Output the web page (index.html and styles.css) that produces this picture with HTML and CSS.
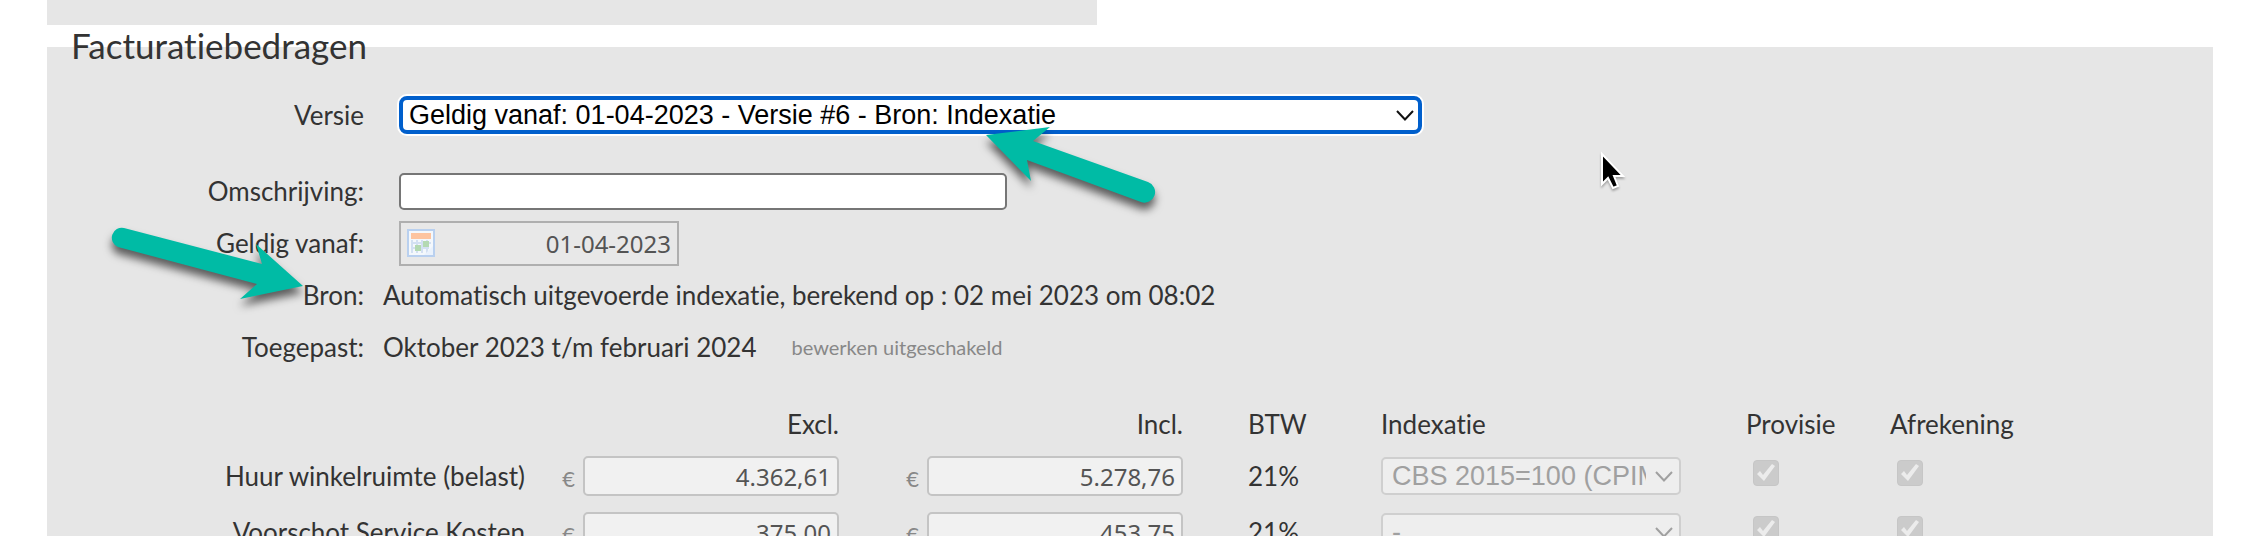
FILE: index.html
```
<!DOCTYPE html>
<html lang="nl">
<head>
    <meta charset="UTF-8">
    <meta name="viewport" content="width=device-width, initial-scale=1.0">
    <title>Facturatiebedragen</title>
    <link rel="stylesheet" href="styles.css">
</head>
<body>
    <!-- Bottom of the previous block -->
    <div class="previous-panel"></div>

    <fieldset class="panel">
        <legend>Facturatiebedragen</legend>

        <div class="row version-row">
            <label class="row-label" for="versie">Versie</label>
            <div class="field select-wrap version-select">
                <select id="versie">
                    <option>Geldig vanaf: 01-04-2023 - Versie #6 - Bron: Indexatie</option>
                </select>
                <svg class="chevron" viewBox="0 0 18 11"><path d="M1 1l8 8.500 8-8.500"/></svg>
            </div>
        </div>

        <div class="row">
            <label class="row-label" for="omschrijving">Omschrijving:</label>
            <input class="field description" type="text" id="omschrijving">
        </div>

        <div class="row">
            <label class="row-label" for="geldig">Geldig vanaf:</label>
            <div class="field date-field">
                <svg class="calendar" viewBox="0 0 28 28">
                    <rect x="1" y="1" width="26" height="26" fill="#f4f8fc" stroke="#b9d0ef" stroke-width="2"/>
                    <path d="M5 11v13M10 11v13M15 11v13M20 11v13M4 14h20M4 19h18" stroke="#d3e0f2" stroke-width="2"/>
                    <rect x="4" y="4" width="20" height="6" fill="#fdc4a0"/>
                    <path d="M17 26l9-9v9z" fill="#eaf2fc"/>
                    <rect x="16" y="12" width="6" height="6" fill="#b4d9b2"/>
                    <rect x="8" y="16" width="6" height="6" fill="#b4d9b2"/>
                </svg>
                <input type="text" id="geldig" value="01-04-2023" disabled>
            </div>
        </div>

        <div class="row">
            <span class="row-label">Bron:</span>
            <span>Automatisch uitgevoerde indexatie, berekend op : 02 mei 2023 om 08:02</span>
        </div>

        <div class="row">
            <span class="row-label">Toegepast:</span>
            <span>Oktober 2023 t/m februari 2024</span>
            <span class="hint">bewerken uitgeschakeld</span>
        </div>

        <table class="amounts">
            <colgroup>
                <col class="col-name">
                <col class="col-amount">
                <col class="col-amount">
                <col class="col-vat">
                <col class="col-index">
                <col class="col-check">
                <col>
            </colgroup>
            <thead>
                <tr>
                    <th></th>
                    <th class="right">Excl.</th>
                    <th class="right">Incl.</th>
                    <th class="vat">BTW</th>
                    <th>Indexatie</th>
                    <th>Provisie</th>
                    <th>Afrekening</th>
                </tr>
            </thead>
            <tbody>
                <tr>
                    <td class="right">Huur winkelruimte (belast)</td>
                    <td><div class="amount"><span>€</span><input type="text" value="4.362,61" aria-label="Excl." disabled></div></td>
                    <td><div class="amount"><span>€</span><input type="text" value="5.278,76" aria-label="Incl." disabled></div></td>
                    <td class="vat">21%</td>
                    <td>
                        <div class="select-wrap index-select">
                            <select aria-label="Indexatie" disabled><option>CBS 2015=100 (CPIM)</option></select>
                            <svg class="chevron" viewBox="0 0 18 11"><path d="M1 1l8 8.500 8-8.500"/></svg>
                        </div>
                    </td>
                    <td><input type="checkbox" aria-label="Provisie" checked disabled></td>
                    <td><input type="checkbox" aria-label="Afrekening" checked disabled></td>
                </tr>
                <tr>
                    <td class="right">Voorschot Service Kosten</td>
                    <td><div class="amount"><span>€</span><input type="text" value="375,00" aria-label="Excl." disabled></div></td>
                    <td><div class="amount"><span>€</span><input type="text" value="453,75" aria-label="Incl." disabled></div></td>
                    <td class="vat">21%</td>
                    <td>
                        <div class="select-wrap index-select">
                            <select aria-label="Indexatie" disabled><option>-</option></select>
                            <svg class="chevron" viewBox="0 0 18 11"><path d="M1 1l8 8.500 8-8.500"/></svg>
                        </div>
                    </td>
                    <td><input type="checkbox" aria-label="Provisie" checked disabled></td>
                    <td><input type="checkbox" aria-label="Afrekening" checked disabled></td>
                </tr>
            </tbody>
        </table>
    </fieldset>

    <!-- Arrows and mouse pointer on top of the form -->
    <svg class="overlay arrow-version" viewBox="0 0 190 100">
        <path d="M6 15L70 7 53 21 168 62A10 10 0 0 1 161 82L47 40 51 61Z"/>
    </svg>
    <svg class="overlay arrow-source" viewBox="0 0 210 90">
        <path d="M203 56L156 14 162 34 24 -2A10 10 0 0 0 18 17L157 54 140 69Z"/>
    </svg>
    <svg class="overlay pointer" viewBox="0 0 28 42">
        <path d="M2 3v30l6-6 5 10 5-2-4-10h9z" fill="#000" stroke="#fff" stroke-width="2"/>
    </svg>
</body>
</html>
```
FILE: styles.css
```
* {
    margin: 0;
    padding: 0;
    box-sizing: border-box;
}

body {
    height: 100vh;
    padding: 0 35px 0 47px;
    background: #fff;
    color: #333;
    font-family: Lato, sans-serif;
    font-size: 26px;
    font-variant-ligatures: none;
    line-height: 30px;
    overflow: hidden;
    position: relative;
}

.previous-panel {
    width: 1050px;
    height: 25px;
    background: #e6e6e6;
}

.panel {
    border: none;
    padding: 0 24px 24px;
    background: #e6e6e6;
}

legend {
    padding-bottom: 4px;
    font-size: 35px;
    line-height: 40px;
}

.row {
    display: flex;
    align-items: center;
    gap: 19px;
    height: 52px;
}

.version-row {
    margin: 20px 0 24px;
}

.row-label {
    width: 293px;
    text-align: right;
}

.field {
    margin-left: 16px;
}

input, select {
    font-family: "Noto Sans", sans-serif;
    font-size: 24px;
}

.select-wrap {
    position: relative;
}

select {
    display: block;
    width: 100%;
    height: 38px;
    appearance: none;
    font-family: "Liberation Sans", Arial, sans-serif;
    font-size: 27px;
}

.chevron {
    position: absolute;
    top: 14px;
    right: 8px;
    width: 18px;
    height: 11px;
    fill: none;
    stroke: #111;
    stroke-width: 2;
    pointer-events: none;
}

.version-select {
    width: 1023px;
}

.version-select select {
    padding: 0 30px 0 6px;
    border: 4px solid #005fcc;
    border-radius: 8px;
    background: #fff;
    color: #000;
    box-shadow: 0 0 0 2px #fff;
}

.description {
    width: 608px;
    height: 37px;
    border: 2px solid #767676;
    border-radius: 5px;
    background: #fff;
}

.date-field {
    display: flex;
    align-items: center;
    width: 280px;
    height: 45px;
    padding: 0 6px;
    border: 2px solid #afafaf;
    background: #e8e8e8;
}

.date-field input {
    flex: 1;
    min-width: 0;
    border: none;
    background: none;
    color: #545454;
    text-align: right;
}

.calendar {
    width: 28px;
    height: 28px;
}

.hint {
    margin-left: 16px;
    color: #888;
    font-size: 20px;
}

/* Table with amounts */
.amounts {
    width: 100%;
    margin-top: 27px;
    table-layout: fixed;
    border-collapse: collapse;
}

.amounts th {
    height: 48px;
    font-weight: normal;
    text-align: left;
}

.amounts td {
    height: 56px;
}

.amounts .right {
    text-align: right;
}

.amounts .vat {
    padding-left: 35px;
}

.col-name {
    width: 454px;
}

.col-amount {
    width: 344px;
}

.amounts th:nth-child(2), .amounts th:nth-child(3) {
    padding-right: 30px;
}

.col-vat {
    width: 168px;
}

.col-index {
    width: 365px;
}

.col-check {
    width: 144px;
}

.amount {
    display: flex;
    align-items: center;
    justify-content: flex-end;
    gap: 8px;
    padding-right: 30px;
}

.amount span {
    padding-top: 6px;
    color: #888;
    font-size: 22px;
}

.amount input {
    width: 256px;
    height: 40px;
    padding: 0 6px;
    border: 2px solid #c4c4c4;
    border-radius: 5px;
    background: #f1f1f1;
    color: #545454;
    text-align: right;
}

.index-select {
    width: 300px;
}

.index-select select {
    padding: 0 33px 0 9px;
    border: 2px solid #cfcfcf;
    border-radius: 5px;
    background: #eee;
    color: #a0a0a0;
    opacity: 1;
}

.index-select .chevron {
    stroke: #a0a0a0;
}

input[type="checkbox"] {
    display: block;
    width: 26px;
    height: 26px;
    margin: 0 0 6px 7px;
    appearance: none;
    border: 1px solid #c6c6c6;
    border-radius: 4px;
    background: #cbcbcb;
}

input[type="checkbox"]::before {
    content: "";
    display: block;
    width: 24px;
    height: 24px;
    background: #ececec;
    clip-path: polygon(3px 13px, 6px 10px, 9px 14px, 18px 3px, 21px 5px, 10px 20px);
}

/* Annotations */
.overlay {
    position: absolute;
    overflow: visible;
    pointer-events: none;
}

.arrow-version, .arrow-source {
    fill: #00bba5;
    filter: drop-shadow(0 7px 4px rgba(0, 0, 0, 0.6));
}

.arrow-version {
    top: 120px;
    left: 980px;
    width: 190px;
    height: 100px;
}

.arrow-source {
    top: 230px;
    left: 100px;
    width: 210px;
    height: 90px;
}

.pointer {
    top: 151px;
    left: 1600px;
    width: 28px;
    height: 42px;
    filter: drop-shadow(0 2px 1px rgba(0, 0, 0, 0.3));
}
```
